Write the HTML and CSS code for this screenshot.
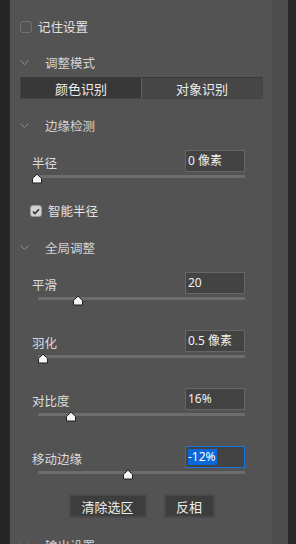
FILE: index.html
```html
<!DOCTYPE html>
<html lang="zh">
<head>
<meta charset="utf-8">
<link rel="stylesheet" href="styles.css">
</head>
<body>
<div class="app">
  <div class="edge-left"></div>
  <div class="panel">
    <div class="check-row cr-remember"><span class="checkbox"></span><span class="check-text">记住设置</span></div>

    <div class="section-head sh-mode"><svg class="chev" width="9" height="5" viewBox="0 0 9 5"><path d="M0.5 0.5 L4.5 4.5 L8.5 0.5" fill="none" stroke="#8e8e8e" stroke-width="1"/></svg><span>调整模式</span></div>
    <div class="segmented">
      <div class="seg active">颜色识别</div>
      <div class="seg">对象识别</div>
    </div>

    <div class="section-head sh-edge"><svg class="chev" width="9" height="5" viewBox="0 0 9 5"><path d="M0.5 0.5 L4.5 4.5 L8.5 0.5" fill="none" stroke="#8e8e8e" stroke-width="1"/></svg><span>边缘检测</span></div>
    <div class="field f-radius">
      <div class="field-row"><span class="label">半径</span><div class="input">0 像素</div></div>
      <div class="slider"><div class="track"></div><svg class="thumb" style="left:-7px" width="12" height="11" viewBox="0 0 12 11"><path d="M1.5 10 V6 Q1.5 5.3 2.1 4.8 L6 1.2 L9.9 4.8 Q10.5 5.3 10.5 6 V10 Z" fill="#f4f4f4" stroke="#1e1e1e" stroke-width="1" stroke-linejoin="round"/></svg></div>
    </div>

    <div class="check-row cr-smart"><span class="checkbox checked"><svg width="8" height="7" viewBox="0 0 8 7"><path d="M1 3.6 L3 5.6 L7 1.2" fill="none" stroke="#333" stroke-width="1.6"/></svg></span><span class="check-text">智能半径</span></div>

    <div class="section-head sh-global"><svg class="chev" width="9" height="5" viewBox="0 0 9 5"><path d="M0.5 0.5 L4.5 4.5 L8.5 0.5" fill="none" stroke="#8e8e8e" stroke-width="1"/></svg><span>全局调整</span></div>

    <div class="field f-first">
      <div class="field-row"><span class="label">平滑</span><div class="input">20</div></div>
      <div class="slider"><div class="track"></div><svg class="thumb" style="left:34px" width="12" height="11" viewBox="0 0 12 11"><path d="M1.5 10 V6 Q1.5 5.3 2.1 4.8 L6 1.2 L9.9 4.8 Q10.5 5.3 10.5 6 V10 Z" fill="#f4f4f4" stroke="#1e1e1e" stroke-width="1" stroke-linejoin="round"/></svg></div>
    </div>
    <div class="field">
      <div class="field-row"><span class="label">羽化</span><div class="input">0.5 像素</div></div>
      <div class="slider"><div class="track"></div><svg class="thumb" style="left:-1px" width="12" height="11" viewBox="0 0 12 11"><path d="M1.5 10 V6 Q1.5 5.3 2.1 4.8 L6 1.2 L9.9 4.8 Q10.5 5.3 10.5 6 V10 Z" fill="#f4f4f4" stroke="#1e1e1e" stroke-width="1" stroke-linejoin="round"/></svg></div>
    </div>
    <div class="field">
      <div class="field-row"><span class="label">对比度</span><div class="input">16%</div></div>
      <div class="slider"><div class="track"></div><svg class="thumb" style="left:27px" width="12" height="11" viewBox="0 0 12 11"><path d="M1.5 10 V6 Q1.5 5.3 2.1 4.8 L6 1.2 L9.9 4.8 Q10.5 5.3 10.5 6 V10 Z" fill="#f4f4f4" stroke="#1e1e1e" stroke-width="1" stroke-linejoin="round"/></svg></div>
    </div>
    <div class="field">
      <div class="field-row"><span class="label">移动边缘</span><div class="input focused"><span class="sel">-12%</span></div></div>
      <div class="slider"><div class="track"></div><svg class="thumb" style="left:84px" width="12" height="11" viewBox="0 0 12 11"><path d="M1.5 10 V6 Q1.5 5.3 2.1 4.8 L6 1.2 L9.9 4.8 Q10.5 5.3 10.5 6 V10 Z" fill="#f4f4f4" stroke="#1e1e1e" stroke-width="1" stroke-linejoin="round"/></svg></div>
    </div>

    <div class="buttons">
      <div class="btn btn-clear">清除选区</div>
      <div class="btn btn-invert">反相</div>
    </div>

    <div class="section-head sh-output"><svg class="chev" width="9" height="5" viewBox="0 0 9 5"><path d="M0.5 0.5 L4.5 4.5 L8.5 0.5" fill="none" stroke="#8e8e8e" stroke-width="1"/></svg><span>输出设置</span></div>
  </div>
  <div class="scrollbar"></div>
  <div class="edge-right"></div>
</div>
</body>
</html>
```

FILE: styles.css
```css
html, body {
  margin: 0;
  padding: 0;
  height: 100%;
  background: #262626;
  overflow: hidden;
}
body {
  font-family: "Noto Sans CJK SC", "Noto Sans", sans-serif;
  font-size: 12px;
  color: #dedede;
}
.app {
  display: flex;
  height: 544px;
}
.edge-left {
  width: 9px;
  background: #262626;
  border-right: 1px solid #2e2e2e;
}
.panel {
  width: 262px;
  background: #535353;
  box-sizing: border-box;
  padding: 15px 9px 0 10px;
  overflow: hidden;
}
.scrollbar {
  width: 16px;
  background: #4e4e4e;
}
.edge-right {
  width: 8px;
  background: #282828;
}

/* checkbox rows */
.check-row {
  display: flex;
  align-items: center;
  height: 24px;
  gap: 6px;
}
.cr-smart {
  margin-top: 13px;
  padding-left: 10px;
}
.checkbox {
  width: 12px;
  height: 12px;
  box-sizing: border-box;
  border: 1.5px solid #727272;
  border-radius: 3px;
  display: flex;
  align-items: center;
  justify-content: center;
}
.checkbox.checked {
  background: #d2d2d2;
  border-color: #9a9a9a;
}
.check-text {
  line-height: 24px;
  color: #e4e4e4;
  font-size: 12.5px;
}

/* section headers */
.section-head {
  display: flex;
  align-items: center;
  height: 24px;
  color: #d4d4d4;
  font-size: 12.5px;
}
.chev {
  margin-right: 16px;
  flex: none;
}
.sh-mode { margin-top: 11px; }
.sh-edge { margin-top: 14px; }
.sh-global { margin-top: 12px; }
.sh-output { margin-top: 15px; }

/* segmented control */
.segmented {
  margin-top: 3px;
  display: flex;
  height: 22px;
  box-sizing: border-box;
  border: 1px solid #444;
  border-top-color: #3a3a3a;
}
.seg {
  flex: 1;
  display: flex;
  align-items: center;
  justify-content: center;
  background: #474747;
  color: #ececec;
  font-size: 13px;
}
.seg.active {
  background: #383838;
  border-right: 1px solid #5e5e5e;
}

/* fields */
.field {
  margin-top: 22px;
  padding: 0 18px 0 12px;
}
.f-radius { margin-top: 13px; }
.f-first { margin-top: 13px; }
.field-row {
  display: flex;
  align-items: center;
  justify-content: space-between;
  height: 22px;
}
.label {
  color: #dcdcdc;
  padding-top: 2px;
  font-size: 12.5px;
}
.input {
  width: 60px;
  height: 22px;
  box-sizing: border-box;
  border: 1px solid #666;
  background: #434343;
  color: #f0f0f0;
  padding-left: 2px;
  line-height: 20px;
  font-family: "Noto Sans", "Noto Sans CJK SC", sans-serif;
  font-size: 12px;
  white-space: nowrap;
}
.input.focused {
  border-color: #1473e6;
  padding-top: 2px;
  line-height: 16px;
}
.sel {
  background: #0b68d8;
  color: #ffffff;
  display: inline-block;
  padding-right: 1px;
}
.slider {
  position: relative;
  height: 14px;
  box-sizing: border-box;
  padding-top: 3px;
  margin-left: 6px;
}
.track {
  height: 3px;
  background: #6c6c6c;
}
.thumb {
  position: absolute;
  top: 1px;
}

/* buttons */
.buttons {
  margin-top: 12px;
  display: flex;
  justify-content: center;
  gap: 17px;
}
.btn {
  height: 24px;
  box-sizing: border-box;
  border: 2px solid #494949;
  border-radius: 3px;
  background: #3d3d3d;
  color: #ececec;
  display: flex;
  align-items: center;
  justify-content: center;
  font-size: 13px;
}
.btn-clear { width: 78px; }
.btn-invert { width: 51px; }
```
